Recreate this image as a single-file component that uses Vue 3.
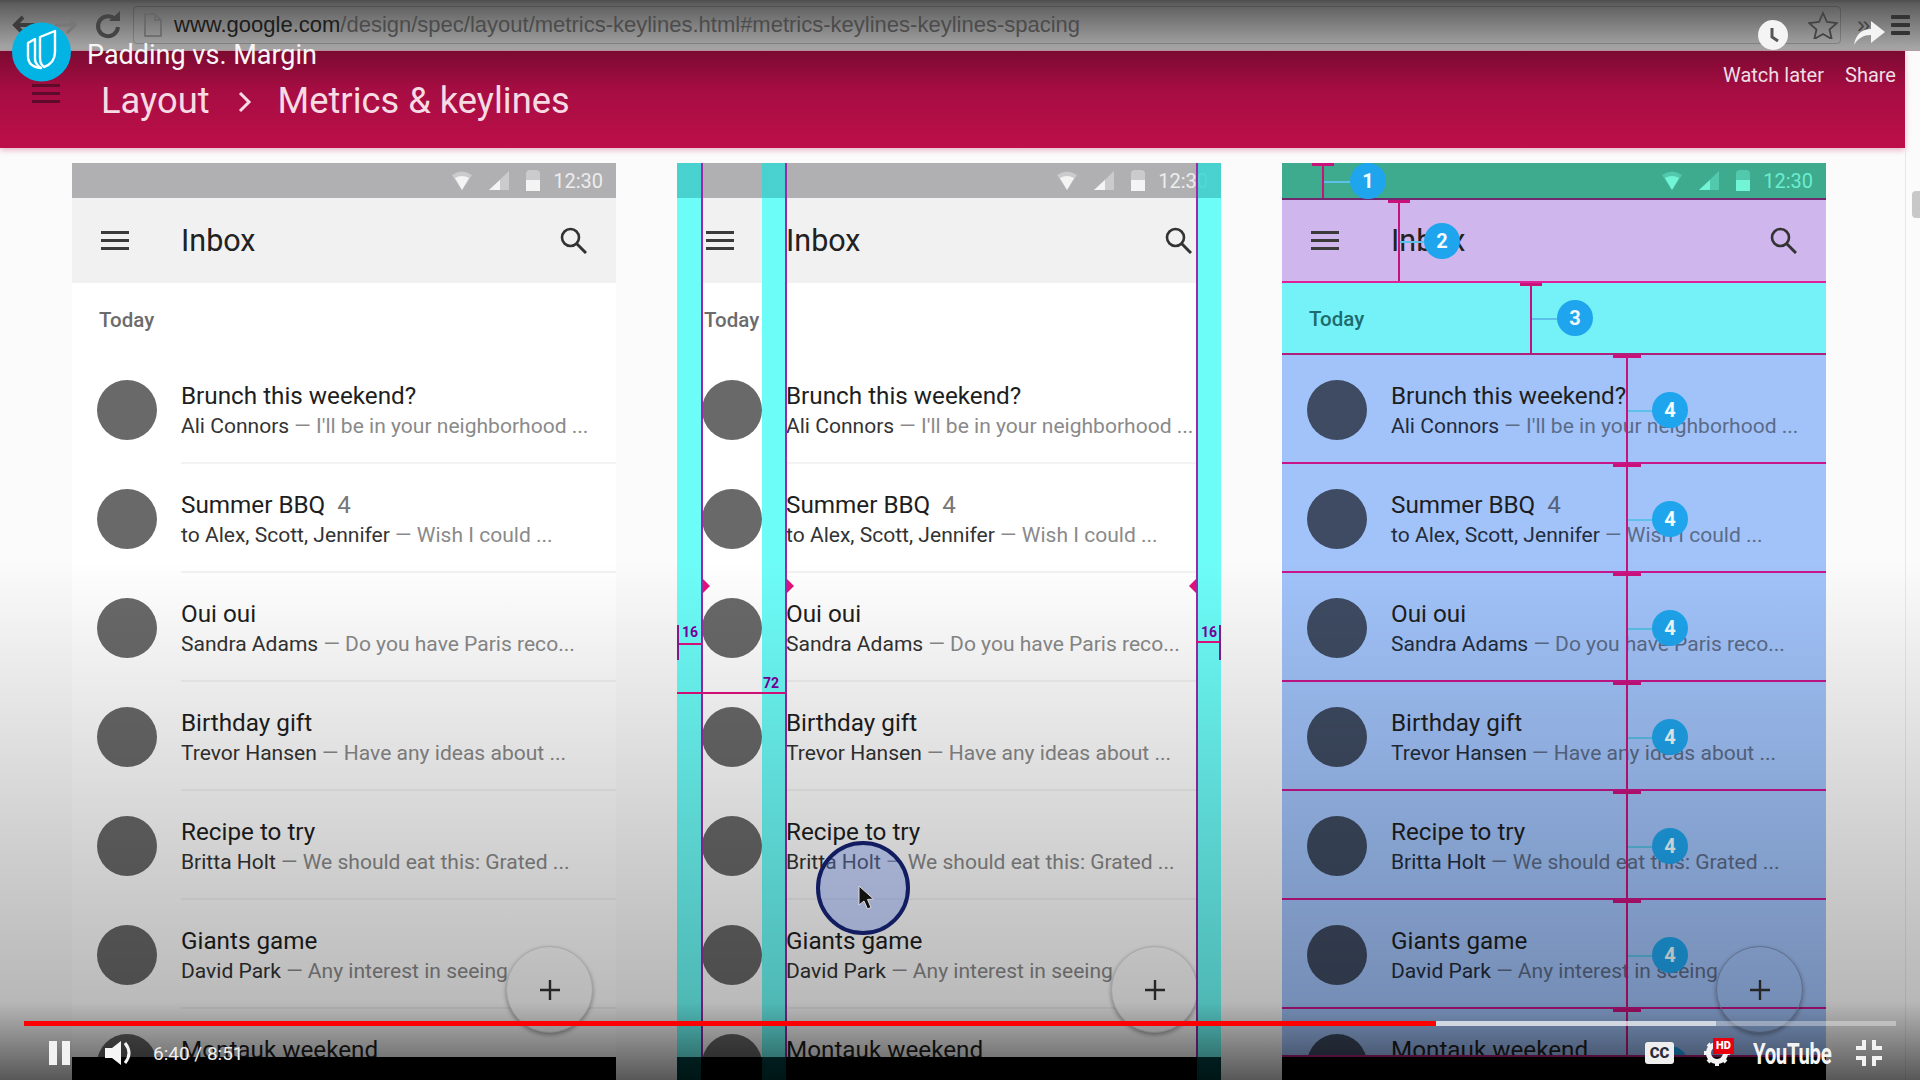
<script setup>
const variants = ['plain', 'keylines', 'regions']

const rows = [
  { title: 'Brunch this weekend?', from: 'Ali Connors', text: "I'll be in your neighborhood ..." },
  { title: 'Summer BBQ', count: 4, from: 'to Alex, Scott, Jennifer', text: 'Wish I could ...' },
  { title: 'Oui oui', from: 'Sandra Adams', text: 'Do you have Paris reco...' },
  { title: 'Birthday gift', from: 'Trevor Hansen', text: 'Have any ideas about ...' },
  { title: 'Recipe to try', from: 'Britta Holt', text: 'We should eat this: Grated ...' },
  { title: 'Giants game', from: 'David Park', text: 'Any interest in seeing' },
  { title: 'Montauk weekend' }
]

// spec callouts on the third phone, x relative to the phone
const callouts = { status: { n: 1, line: 40, dot: 86 }, bar: { n: 2, line: 116, dot: 160 }, sub: { n: 3, line: 248, dot: 293 } }
</script>

<template>
  <div class="video">
    <header class="browser">
      <svg class="nav-icons" width="120" height="30" viewBox="0 0 120 30">
        <path d="M30 15H11M18 7l-8 8 8 8" fill="none" stroke="#3c3c3c" stroke-width="4" />
        <path d="M50 15h19M62 7l8 8-8 8" fill="none" stroke="#777" stroke-width="3" />
        <path d="M110 9a10 10 0 1 0 3 8" fill="none" stroke="#444" stroke-width="4" />
        <path d="M104 11h11V1z" fill="#444" />
      </svg>
      <div class="address">
        <svg width="18" height="24" viewBox="0 0 18 24"><path d="M1 1h10l6 6v16H1zM11 1v6h6" fill="none" stroke="#666" stroke-width="1.5" /></svg>
        <span class="url"><b>www.google.com</b>/design/spec/layout/metrics-keylines.html#metrics-keylines-keylines-spacing</span>
        <svg class="star" width="30" height="28" viewBox="0 0 30 28"><path d="M15 2l4 9 10 1-7.500 6.500 2.200 9.500-8.700-5-8.700 5 2.200-9.500L1 12l10-1z" fill="none" stroke="#444" stroke-width="1.800" /></svg>
      </div>
      <span class="more">»</span>
      <div class="chrome-menu"><i></i><i></i><i></i></div>
    </header>

    <div class="appbar">
      <div class="burger"><i></i><i></i><i></i></div>
      <span class="crumb">Layout</span>
      <svg class="chevron" width="14" height="22" viewBox="0 0 14 22"><path d="M2 2l9 9-9 9" fill="none" stroke="#f6dbe4" stroke-width="3" /></svg>
      <span class="crumb">Metrics &amp; keylines</span>
    </div>

    <main class="stage">
      <section v-for="v in variants" :key="v" class="phone" :class="v">
        <div class="status">
          <div v-if="v === 'regions'" class="callout" :style="{ left: callouts.status.line + 'px' }">
            <i class="cap"></i>
            <i class="link" :style="{ width: callouts.status.dot - callouts.status.line + 'px' }"></i>
            <b class="dot" :style="{ left: callouts.status.dot - callouts.status.line + 'px' }">1</b>
          </div>
          <svg class="st-icon" width="20" height="19" viewBox="0 0 20 19"><path d="M0 4Q10-3 20 4L10 19z" fill="currentColor" opacity=".4" /><path d="M3 7Q10 3 17 7L10 19z" fill="currentColor" /></svg>
          <svg class="st-icon" width="20" height="19" viewBox="0 0 20 19"><path d="M20 0V19H0z" fill="currentColor" opacity=".4" /><path d="M11 9V19H0z" fill="currentColor" /></svg>
          <svg class="st-icon" width="14" height="21" viewBox="0 0 14 21"><path d="M0 4Q0 0 4 0H10Q14 0 14 4V10H0z" fill="currentColor" opacity=".4" /><rect y="10" width="14" height="11" fill="currentColor" /></svg>
          <span class="clock">12:30</span>
        </div>

        <div class="toolbar">
          <div v-if="v === 'regions'" class="callout" :style="{ left: callouts.bar.line + 'px' }">
            <i class="cap"></i>
            <i class="link" :style="{ width: callouts.bar.dot - callouts.bar.line + 'px' }"></i>
            <b class="dot" :style="{ left: callouts.bar.dot - callouts.bar.line + 'px' }">2</b>
          </div>
          <div class="menu"><i></i><i></i><i></i></div>
          <span class="inbox">Inbox</span>
          <svg class="search" width="27" height="27" viewBox="0 0 27 27"><circle cx="10.500" cy="10.500" r="8.500" fill="none" stroke="currentColor" stroke-width="2.600" /><path d="M16.500 16.500L26 26" stroke="currentColor" stroke-width="3" /></svg>
        </div>

        <div class="subhead">
          <div v-if="v === 'regions'" class="callout" :style="{ left: callouts.sub.line + 'px' }">
            <i class="cap"></i>
            <i class="link" :style="{ width: callouts.sub.dot - callouts.sub.line + 'px' }"></i>
            <b class="dot" :style="{ left: callouts.sub.dot - callouts.sub.line + 'px' }">3</b>
          </div>
          Today
        </div>

        <div class="list">
          <article v-for="r in rows" :key="r.title" class="row">
            <div class="avatar"></div>
            <div class="copy">
              <div class="title">{{ r.title }}<span v-if="r.count" class="count">{{ r.count }}</span></div>
              <div v-if="r.from" class="sub"><span class="from">{{ r.from }}</span> — {{ r.text }}</div>
              <div v-else class="sub">&nbsp;</div>
            </div>
            <div v-if="v === 'regions'" class="callout row-call">
              <i class="cap"></i>
              <i class="link"></i>
              <b class="dot">4</b>
            </div>
          </article>
        </div>

        <button class="fab"><svg width="22" height="22" viewBox="0 0 22 22"><path d="M11 1v20M1 11h20" stroke="#333" stroke-width="2.400" /></svg></button>
        <div class="foot"></div>

        <template v-if="v === 'keylines'">
          <i class="band b1"></i><i class="band b2"></i><i class="band b3"></i>
          <i class="kline k1"></i><i class="kline k2"></i><i class="kline k3"></i>
          <i class="tri t1"></i><i class="tri t2"></i><i class="tri t3"></i>
          <span class="dim d1">16</span><span class="dim d2">72</span><span class="dim d3">16</span>
          <i class="rule r1"></i><i class="rule r2"></i><i class="rule r3"></i>
          <i class="tick t-l"></i><i class="tick t-r"></i>
        </template>
      </section>
    </main>

    <div class="scroll-track"><i></i></div>

    <div class="shade"></div>
    <div class="touch"></div>
    <svg class="cursor" width="20" height="28" viewBox="0 0 20 28"><path d="M3 2l0 19 5-4 3.500 8 3.500-1.500-3.500-8 6-.5z" fill="#111" stroke="#ddd" stroke-width="1" /></svg>

    <!-- player chrome over the video -->
    <div class="brand">
      <svg width="59" height="60" viewBox="0 0 59 60">
        <circle cx="29.500" cy="30" r="29.500" fill="#02b3e4" />
        <path d="M16 21l7-4v20q0 5 6 9 -13-1-13-12zM28 15l15-6v21q0 11-11 15 -4-3-4-9z" fill="none" stroke="#fff" stroke-width="2.400" stroke-linejoin="round" />
      </svg>
      <span class="video-title">Padding vs. Margin</span>
    </div>

    <div class="top-action later">
      <svg width="30" height="30" viewBox="0 0 30 30"><circle cx="15" cy="15" r="15" fill="#f4f4f4" /><path d="M14 8v9l6 4" fill="none" stroke="#555" stroke-width="3" /></svg>
      <span>Watch later</span>
    </div>
    <div class="top-action share">
      <svg width="32" height="26" viewBox="0 0 32 26"><path d="M0 25C2 13 9 9 17 9V1l14 11-14 11v-8C10 15 4 18 0 25z" fill="#f4f4f4" /></svg>
      <span>Share</span>
    </div>

    <div class="progress">
      <i class="played"></i><i class="loaded"></i>
    </div>
    <div class="controls">
      <div class="pause"><i></i><i></i></div>
      <svg width="28" height="26" viewBox="0 0 28 26"><path d="M0 8h7l9-7v24l-9-7H0z" fill="#f5f5f5" /><path d="M20 3q8 10 0 20" fill="none" stroke="#f5f5f5" stroke-width="3" /></svg>
      <span class="time">6:40 / 8:51</span>
      <span class="spacer"></span>
      <span class="cc">CC</span>
      <div class="gear">
        <svg width="30" height="28" viewBox="0 0 30 28"><circle cx="15" cy="14" r="8.500" fill="none" stroke="#f2f2f2" stroke-width="5" /><path d="M15 1v6M15 21v6M2 14h6M22 14h6M6 5l4 4M20 19l4 4M24 5l-4 4M10 19l-4 4" stroke="#f2f2f2" stroke-width="4" /></svg>
        <span class="hd">HD</span>
      </div>
      <span class="yt">YouTube</span>
      <svg width="26" height="26" viewBox="0 0 26 26"><path d="M8 0v8H0M18 0v8h8M8 26v-8H0M18 26v-8h8" fill="none" stroke="#f2f2f2" stroke-width="4" /></svg>
    </div>
  </div>
</template>

<style>
html, body { margin: 0; background: #fafafa; }
</style>

<style scoped>
.video {
  position: relative;
  width: 1920px;
  height: 1080px;
  overflow: hidden;
  background: #fbfbfb;
  font-family: Roboto, sans-serif;
}

.browser {
  height: 51px;
  box-sizing: border-box;
  display: flex;
  align-items: center;
  padding-left: 5px;
  background: linear-gradient(#4d4d4d, #5e5e5e 8%, #a8a8a8);
  border-bottom: 1px solid #b59aa2;
}
.nav-icons { width: 120px; margin-right: 8px; flex: none; }
.address {
  width: 1708px;
  height: 38px;
  flex: none;
  box-sizing: border-box;
  display: flex;
  align-items: center;
  gap: 12px;
  padding: 0 2px 0 10px;
  border: 1px solid rgba(0, 0, 0, .18);
  border-radius: 4px;
}
.url {
  flex: 1;
  font: 22px "Liberation Sans", sans-serif;
  color: #4c4c4c;
  white-space: nowrap;
}
.url b { font-weight: 400; color: #1c1c1c; }
.more { margin-left: 16px; font: 24px "Liberation Sans", sans-serif; color: #444; }
.chrome-menu { margin-left: 21px; display: flex; flex-direction: column; gap: 4px; }
.chrome-menu i { display: block; width: 19px; height: 4px; background: #333; border-radius: 1px; }

.appbar {
  width: 1905px;
  height: 97px;
  box-sizing: border-box;
  display: flex;
  align-items: center;
  padding: 4px 0 0 32px;
  background: linear-gradient(#7b0a31, #a60d42 40%, #bd0f4a);
  box-shadow: 0 2px 6px rgba(190, 40, 90, .35);
  color: #f6dbe4;
}
.burger { display: flex; flex-direction: column; gap: 5px; margin: -16px 41px 0 0; }
.burger i { display: block; width: 28px; height: 3px; background: #5e0a2a; }
.crumb { font-size: 36.300px; line-height: 1; }
.chevron { margin: 0 26px 0 28px; }

.stage {
  display: flex;
  gap: 61px;
  padding: 15px 0 0 72px;
}
.phone {
  position: relative;
  z-index: 0;
  width: 544px;
  height: 917px;
  flex: none;
  display: flex;
  flex-direction: column;
  background: #fff;
  overflow: hidden;
}
.status {
  position: relative;
  z-index: 2;
  height: 35px;
  flex: none;
  display: flex;
  align-items: center;
  justify-content: flex-end;
  gap: 17px;
  padding-right: 13px;
  background: #b0b0b2;
  color: #f4f4f4;
}
.clock { font-size: 20px; margin-left: -4px; opacity: .9; }
.toolbar {
  position: relative;
  z-index: 1;
  height: 85px;
  flex: none;
  display: flex;
  align-items: center;
  padding: 0 29px;
  background: #f1f1f1;
  color: #333;
}
.menu { display: flex; flex-direction: column; gap: 5px; width: 52px; margin-right: 28px; }
.menu i { display: block; width: 28px; height: 3px; background: #3a3a3a; }
.inbox { flex: 1; font-size: 30.500px; color: #222; }
.subhead {
  position: relative;
  height: 72px;
  flex: none;
  display: flex;
  align-items: center;
  padding: 2px 0 0 27px;
  box-sizing: border-box;
  font-size: 20.500px;
  font-weight: 500;
  color: #6b6b6b;
}
.list { flex: 1; min-height: 0; overflow: hidden; }
.row {
  position: relative;
  height: 109px;
  display: flex;
  align-items: center;
  box-sizing: border-box;
}
.row::after {
  content: '';
  position: absolute;
  left: 109px;
  right: 0;
  bottom: 0;
  height: 2px;
  background: #f3f3f3;
}
.avatar {
  width: 60px;
  height: 60px;
  flex: none;
  margin: 0 24px 0 25px;
  border-radius: 50%;
  background: #696969;
}
.copy { padding-top: 1px; white-space: nowrap; }
.title { position: relative; top: 1px; font-size: 24.250px; line-height: 32px; color: #1e1e1e; }
.count { margin-left: 12px; color: #777; }
.sub { font-size: 21.050px; line-height: 30px; color: #8a8a8a; }
.from { color: #333; }
.fab {
  position: absolute;
  right: 23px;
  bottom: 47px;
  width: 87px;
  height: 87px;
  padding: 0;
  display: flex;
  align-items: center;
  justify-content: center;
  background: #fdfdfd;
  border: 1px solid #ddd;
  border-radius: 50%;
  box-shadow: 0 2px 4px rgba(0, 0, 0, .35);
}
.foot { height: 23px; flex: none; background: #000; position: relative; z-index: 3; }

/* keyline overlays */
.band {
  position: absolute;
  top: 0;
  bottom: 0;
  z-index: 4;
  width: 24px;
  background: linear-gradient(rgba(58, 214, 210, .88) 35px, #6dfdf9 35px, #6dfdf9 894px, #003f3f 894px);
}
.b1 { left: 0; }
.b2 { left: 85px; }
.b3 { right: 0; }
.kline { position: absolute; top: 0; bottom: 23px; z-index: 5; width: 2px; background: #9c2aa8; }
.k1 { left: 24px; }
.k2 { left: 108px; }
.k3 { left: 519px; }
.tri { position: absolute; top: 416px; z-index: 5; width: 0; height: 0; border-top: 7px solid transparent; border-bottom: 7px solid transparent; }
.t1 { left: 26px; border-left: 7px solid #e2107e; }
.t2 { left: 110px; border-left: 7px solid #e2107e; }
.t3 { left: 512px; border-right: 7px solid #e2107e; }
.dim { position: absolute; z-index: 5; font-size: 14px; font-weight: 700; line-height: 16px; color: #7a00a0; }
.d1 { left: 5px; top: 461px; }
.d2 { left: 86px; top: 512px; }
.d3 { left: 524px; top: 461px; }
.rule { position: absolute; z-index: 5; height: 2px; background: #e2107e; }
.r1 { left: 0; width: 24px; top: 480px; }
.r2 { left: 0; width: 108px; top: 529px; }
.r3 { left: 519px; width: 25px; top: 478px; }
.tick { position: absolute; z-index: 5; top: 462px; width: 2px; height: 35px; background: #8a1a90; }
.t-l { left: 0; }
.t-r { right: 0; }

/* region colours */
.regions .status { background: #3eab8f; color: #71f5d6; }
.regions .toolbar { background: #cfb6ec; border-top: 2px solid #70286e; border-bottom: 2px solid #e0209a; box-sizing: border-box; }
.regions .subhead { background: #74f2f8; color: #1e6b6e; border-bottom: 2px solid #b0207a; }
.regions .list { background: #a1c3fa; }
.regions .row::after { left: 0; right: 0; background: #c9158a; }
.regions .avatar { background: #3e4b62; }
.regions .sub { color: #5b6b88; }
.regions .from { color: #232c3c; }
.regions .count { color: #56627a; }
.regions .fab { background: transparent; border-color: #7f8fb5; }
.regions .foot { border-top: 2px solid #b0207a; }
.callout { position: absolute; top: 0; bottom: 0; width: 2px; background: #c8127a; z-index: 6; }
.cap { position: absolute; top: 0; left: -10px; width: 22px; height: 3px; background: #c8127a; }
.link { position: absolute; left: 2px; top: 50%; height: 2px; background: #5cc0e8; }
.dot {
  position: absolute;
  top: 50%;
  width: 36px;
  height: 36px;
  margin: -18px 0 0 -18px;
  border-radius: 50%;
  display: flex;
  align-items: center;
  justify-content: center;
  background: #1ea5ee;
  color: #f2fbff;
  font-size: 20px;
  font-weight: 700;
}
.row-call { left: 344px; }
.row-call .cap { width: 28px; left: -13px; }
.row-call .link { width: 44px; }
.row-call .dot { left: 44px; }

.scroll-track {
  position: absolute;
  top: 51px;
  right: 0;
  bottom: 0;
  width: 14px;
  border-left: 1px solid #e8e8e8;
}
.scroll-track i {
  position: absolute;
  top: 140px;
  right: 0;
  width: 8px;
  height: 27px;
  border-radius: 4px 0 0 4px;
  background: #c8c8c8;
}

.shade {
  position: absolute;
  left: 0;
  right: 0;
  top: 560px;
  bottom: 0;
  background: linear-gradient(rgba(0, 0, 0, 0), rgba(0, 0, 0, .27) 85%, rgba(0, 0, 0, .65));
}
.touch {
  position: absolute;
  left: 816px;
  top: 841px;
  width: 94px;
  height: 94px;
  box-sizing: border-box;
  border: 4px solid #111d60;
  border-radius: 50%;
  background: rgba(100, 125, 205, .4);
}
.cursor { position: absolute; left: 856px; top: 884px; }

.brand { position: absolute; left: 12px; top: 22px; display: flex; align-items: center; gap: 16px; }
.video-title { margin-top: 5px; font-size: 27px; color: #f6f6f6; }
.top-action { position: absolute; top: 20px; display: flex; flex-direction: column; align-items: center; gap: 13px; font-size: 20px; color: #eedfe4; }
.later { left: 1723px; }
.share { left: 1845px; gap: 17px; }

.progress {
  position: absolute;
  left: 24px;
  top: 1021px;
  width: 1872px;
  height: 5px;
  display: flex;
  background: rgba(255, 255, 255, .35);
}
.progress i { display: block; height: 100%; }
.played { width: 1412px; background: #f00; }
.loaded { width: 280px; background: rgba(255, 255, 255, .55); }

.controls {
  position: absolute;
  left: 49px;
  right: 38px;
  top: 1040px;
  height: 26px;
  display: flex;
  align-items: center;
}
.pause { display: flex; gap: 5px; margin-right: 35px; }
.pause i { display: block; width: 8px; height: 24px; background: #f2f2f2; }
.time { margin-left: 20px; font-size: 19px; color: #eee; }
.spacer { flex: 1; }
.cc {
  width: 29px;
  height: 22px;
  display: flex;
  align-items: center;
  justify-content: center;
  border-radius: 3px;
  background: #eee;
  color: #2a2a3a;
  font-size: 15px;
  font-weight: 900;
  line-height: 1;
}
.gear { position: relative; margin: 0 19px 0 28px; width: 32px; height: 28px; }
.hd {
  position: absolute;
  left: 11px;
  top: -1px;
  width: 21px;
  height: 16px;
  background: #e8000f;
  color: #fff;
  font-size: 11px;
  font-weight: 900;
  line-height: 16px;
  text-align: center;
}
.yt {
  width: 78px;
  margin-right: 25px;
  font-size: 30px;
  font-weight: 700;
  letter-spacing: -.5px;
  color: #f4f4f4;
  transform: scaleX(.68);
  transform-origin: left center;
  white-space: nowrap;
}
</style>
